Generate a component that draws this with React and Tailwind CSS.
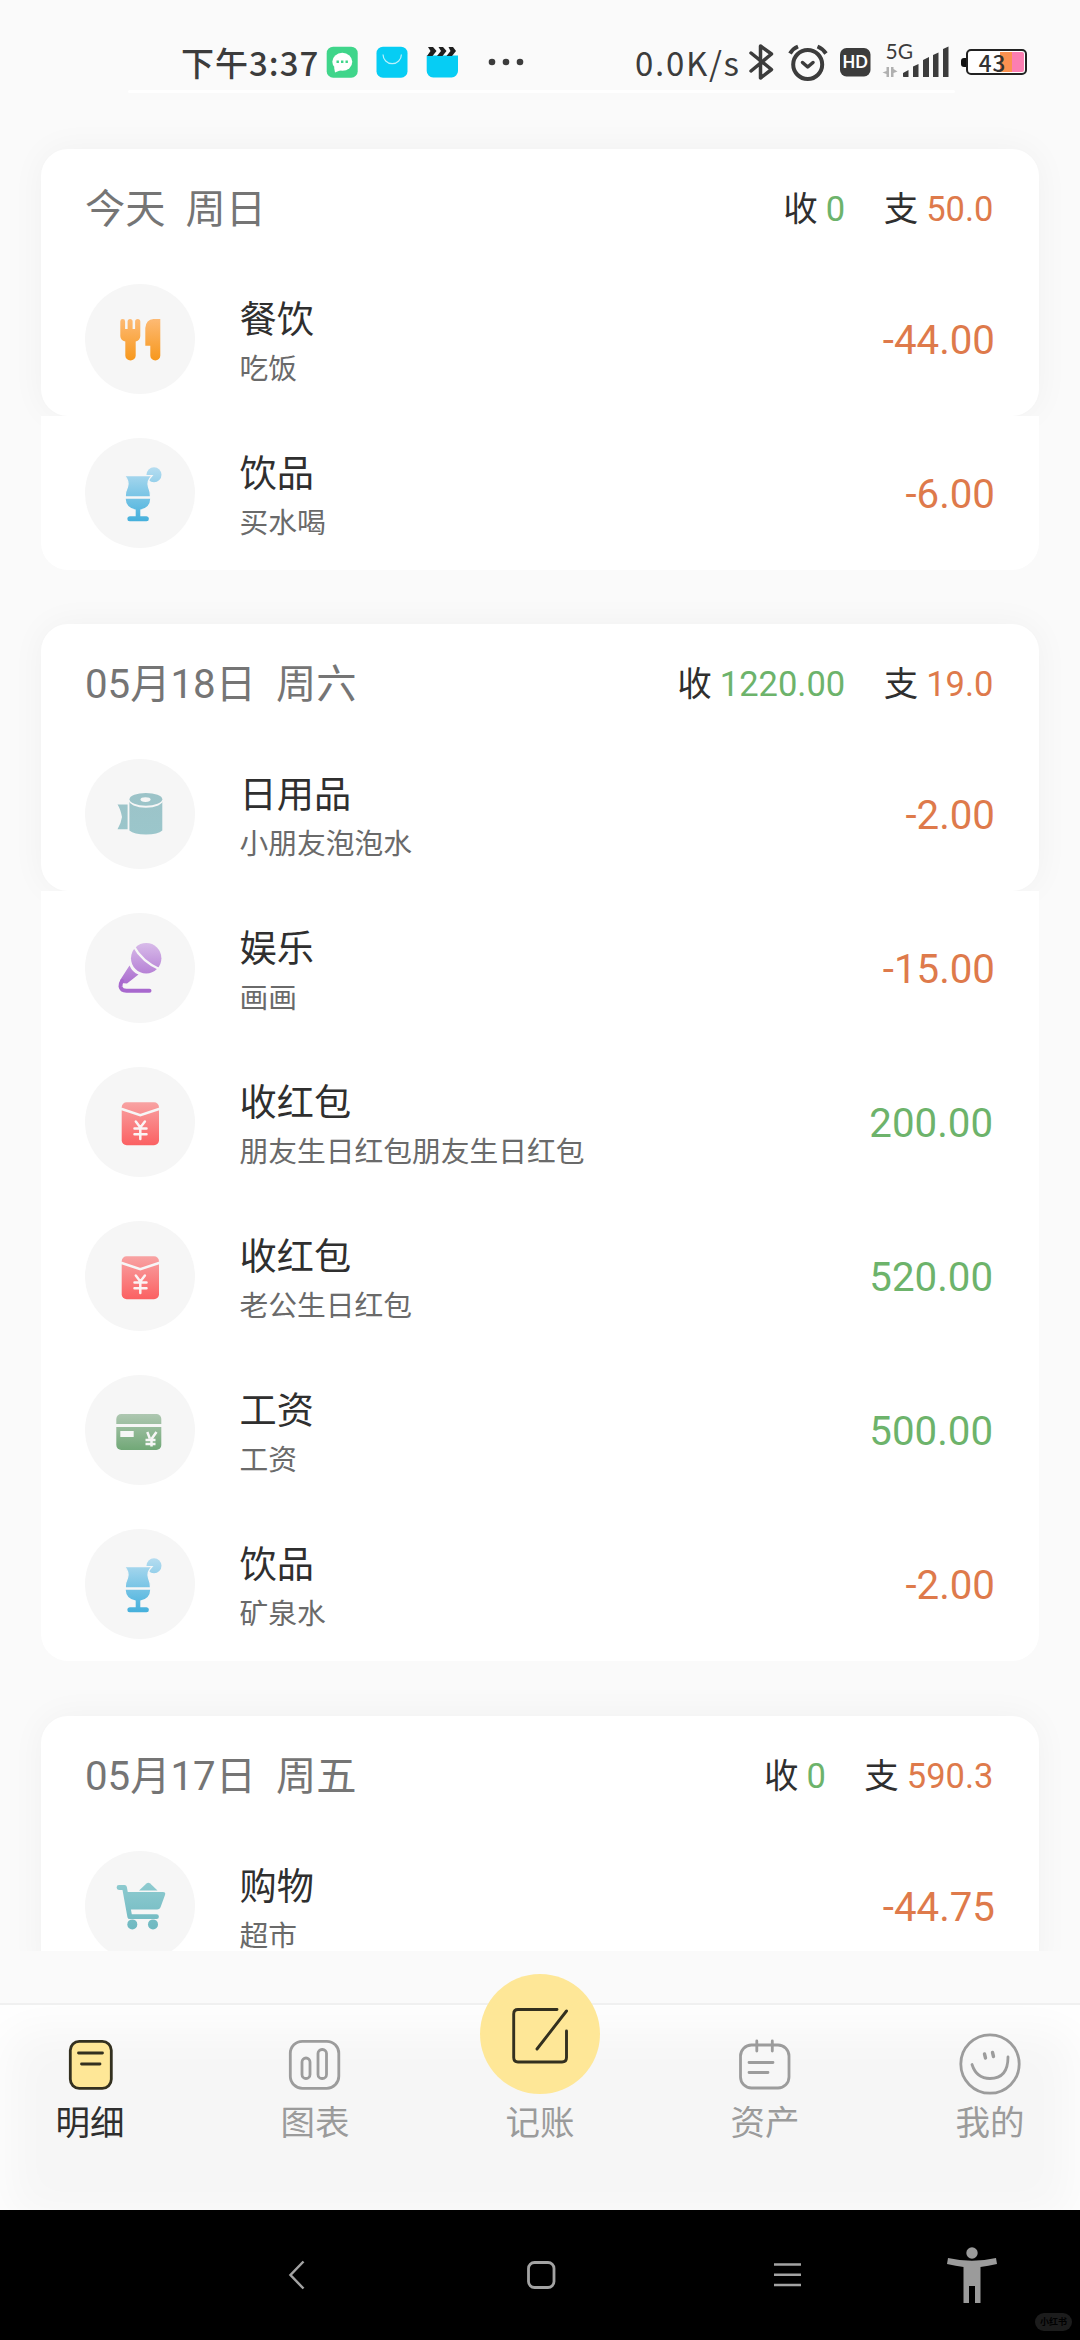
import React from "react";

/* ---------- category icons, drawn on a 110 x 110 disc ---------- */

function Gradient({ id, from, to, y1, y2 }) {
  return (
    <linearGradient id={id} gradientUnits="userSpaceOnUse" x1="0" x2="0" y1={y1} y2={y2}>
      <stop offset="0" stopColor={from} />
      <stop offset="1" stopColor={to} />
    </linearGradient>
  );
}

function Food() {
  return (
    <>
      <Gradient id="food" from="#fdba74" to="#f7981d" y1={35} y2={76} />
      <path
        fill="url(#food)"
        d="M35.3 37.5a2.4 2.4 0 0 1 4.8 0V45h2.5v-7.5a2.5 2.5 0 0 1 5 0V45h2.5v-7.5a2.6 2.6 0 0 1 5.2 0V52q0 4-4.6 5.6V71.500a5.200 5 0 0 1-10.400 0V57.600Q35.300 56 35.300 52Z"
      />
      <path fill="url(#food)" d="M75.300 35V71.500a5 5 0 0 1-10 0V61.700H60.300V44Q61 35.500 68.500 35Z" />
    </>
  );
}

function Drink() {
  return (
    <>
      <Gradient id="drink" from="#b4dcf0" to="#45b0dc" y1={30} y2={83} />
      <circle cx="69" cy="36.700" r="7.500" fill="url(#drink)" />
      <path
        fill="url(#drink)"
        stroke="#f6f6f6"
        strokeWidth="1.200"
        d="M39.500 37.700H67Q61.500 43 63.500 49Q65.500 53.500 65.500 58.900H40.200Q40.200 53.500 42.500 49Q44.500 43 39.500 37.700Z"
      />
      <path
        fill="url(#drink)"
        d="M40.700 60.700H65.200Q65 69.500 55.300 71.600V78.300H61.500a2.400 2.500 0 0 1 0 5H44.700a2.400 2.500 0 0 1 0-5H50.700V71.600Q41 69.500 40.700 60.700Z"
      />
    </>
  );
}

function Tissue() {
  return (
    <>
      <Gradient id="tissue" from="#9cc3c8" to="#9bc6cb" y1={33} y2={76} />
      <path fill="url(#tissue)" d="M44.400 42.500V71.500Q49 75.500 61 75.500T77.300 71.500V42.500Z" />
      <ellipse cx="60.900" cy="40.600" rx="17.400" ry="8.200" fill="#f6f6f6" />
      <ellipse cx="60.900" cy="40.300" rx="16.400" ry="6.400" fill="url(#tissue)" />
      <ellipse cx="60.500" cy="40.600" rx="5" ry="2.400" fill="#f6f6f6" />
      <path fill="url(#tissue)" d="M32.500 45.500H42.600V70.200H32.500Q36.200 64 37 58Q35.500 50 32.500 45.500Z" />
    </>
  );
}

function Mic() {
  return (
    <>
      <Gradient id="mic" from="#d9bdea" to="#a15dc9" y1={29} y2={80} />
      <circle cx="61.200" cy="45.200" r="15.200" fill="url(#mic)" />
      <path d="M48 32Q57 49 76 57" fill="none" stroke="#f6f6f6" strokeWidth="2.400" />
      <path fill="url(#mic)" d="M44.500 52.500Q47.500 59.500 53.500 61.500L42 70.500L35.500 70Q34.300 68.500 35.500 66.500Z" />
      <path
        d="M37 68Q35.300 70.500 35.500 73.500Q36.200 77.700 41.500 77.700H64.500"
        fill="none"
        stroke="#a868ce"
        strokeWidth="4"
        strokeLinecap="round"
      />
    </>
  );
}

function Envelope() {
  return (
    <>
      <Gradient id="envelope" from="#f8a3a3" to="#fb6163" y1={35} y2={78} />
      <rect x="36.700" y="35.300" width="37.300" height="43" rx="5" fill="url(#envelope)" />
      <path d="M36 41.800L55.300 48.300L74.700 41.800" fill="none" stroke="#f6f6f6" strokeWidth="2.500" />
      <path
        d="M50.800 54.500L55.300 60.500L59.900 54.500M55.300 60.500V72M49.500 61.500H61.500M49.500 67.200H61.500"
        fill="none"
        stroke="#fbf3f3"
        strokeWidth="2.500"
        strokeLinecap="round"
      />
    </>
  );
}

function Salary() {
  return (
    <>
      <Gradient id="salary" from="#aec7b1" to="#71a877" y1={39} y2={75} />
      <rect x="31.300" y="39" width="45" height="36" rx="5" fill="url(#salary)" />
      <path d="M31 50.400H77" stroke="#f6f6f6" strokeWidth="3" />
      <rect x="35.300" y="56" width="13.400" height="6" fill="#f6f6f6" />
      <path
        d="M62.300 57L64.800 63.500M71.500 57L66.500 64V71.500M60.500 65H70.500M60.500 69H70.500"
        fill="none"
        stroke="#f6f6f6"
        strokeWidth="2.500"
      />
    </>
  );
}

function Cart() {
  return (
    <>
      <Gradient id="cart" from="#8fcbd0" to="#6fb9c1" y1={31} y2={78} />
      <path
        d="M34 36.500H39.500L44.800 65.700H71.500"
        fill="none"
        stroke="url(#cart)"
        strokeWidth="4.800"
        strokeLinecap="round"
        strokeLinejoin="round"
      />
      <path fill="url(#cart)" d="M40 41H78Q81 41 80 44L75.800 55.500Q75 58.500 72 58.500H43Z" />
      <path fill="url(#cart)" d="M54 39.500L61.500 32.500Q63.300 31 65.200 32.500L72.500 39.500Z" />
      <circle cx="47.300" cy="73.400" r="5" fill="url(#cart)" />
      <circle cx="68" cy="73.400" r="5" fill="url(#cart)" />
    </>
  );
}

/* ---------- data ---------- */

const days = [
  {
    date: "今天  周日",
    income: "0",
    expense: "50.0",
    items: [
      { icon: Food, title: "餐饮", note: "吃饭", amount: "-44.00" },
      { icon: Drink, title: "饮品", note: "买水喝", amount: "-6.00" },
    ],
  },
  {
    date: "05月18日  周六",
    income: "1220.00",
    expense: "19.0",
    items: [
      { icon: Tissue, title: "日用品", note: "小朋友泡泡水", amount: "-2.00" },
      { icon: Mic, title: "娱乐", note: "画画", amount: "-15.00" },
      { icon: Envelope, title: "收红包", note: "朋友生日红包朋友生日红包", amount: "200.00" },
      { icon: Envelope, title: "收红包", note: "老公生日红包", amount: "520.00" },
      { icon: Salary, title: "工资", note: "工资", amount: "500.00" },
      { icon: Drink, title: "饮品", note: "矿泉水", amount: "-2.00" },
    ],
  },
  {
    date: "05月17日  周五",
    income: "0",
    expense: "590.3",
    items: [{ icon: Cart, title: "购物", note: "超市", amount: "-44.75" }],
  },
];

/* ---------- list ---------- */

function Entry({ item }) {
  const Icon = item.icon;
  const spent = item.amount.startsWith("-");
  return (
    <div className="flex h-[154px] items-center pr-[44px] pl-[44px]">
      <svg viewBox="0 0 110 110" className="size-[110px] shrink-0 rounded-full bg-[#f6f6f6]">
        <Icon />
      </svg>
      <div className="ml-[44.500px] flex-1 self-start pt-[34px]">
        <div className="text-[37.200px] leading-[49px] text-[#2f2f2f]">{item.title}</div>
        <div className="mt-[9px] text-[28.750px] leading-[30px] text-[#6a6a6a]">{item.note}</div>
      </div>
      <div
        className={
          spent ? "pt-[5px] text-[40.250px] text-[#de7a4b]" : "pt-[5px] pr-[2px] text-[40.250px] text-[#6db36b]"
        }
      >
        {item.amount}
      </div>
    </div>
  );
}

function Day({ day }) {
  const [first, ...rest] = day.items;
  return (
    <section className="last:mt-px">
      <div className="rounded-[27px] bg-white shadow-[0_0_34px_rgba(0,0,0,0.045)]">
        <div className="flex h-[113px] items-center justify-between pt-[9px] pr-[45.500px] pl-[44px]">
          <h2 className="text-[40.250px] whitespace-pre text-[#757575]">{day.date}</h2>
          <div className="flex gap-[38.500px] text-[34.500px] text-[#2f2f2f]">
            <div className="flex gap-[8px]">
              <span>收</span>
              <span className="text-[#6db36b]">{day.income}</span>
            </div>
            <div className="flex gap-[8px]">
              <span>支</span>
              <span className="text-[#de7a4b]">{day.expense}</span>
            </div>
          </div>
        </div>
        <Entry item={first} />
      </div>
      {rest.length > 0 && (
        <div className="relative rounded-b-[27px] bg-white">
          {rest.map((item, i) => (
            <Entry key={i} item={item} />
          ))}
        </div>
      )}
    </section>
  );
}

/* ---------- status bar ---------- */

function StatusBar() {
  return (
    <header className="h-[124px]">
      <div className="flex h-[90px] items-center pt-[34px] pl-[181px] font-['Noto_Sans_CJK_SC'] font-medium text-[#3c3c3c]">
        <span className="w-[145px] text-[33px] leading-[40px] tracking-[1px] whitespace-nowrap">下午3:37</span>
        <svg viewBox="0 0 200 40" className="h-[40px] w-[200px] shrink-0">
          <rect x="0.700" y="4.700" width="31" height="31" rx="6.500" fill="#3fd58a" />
          <ellipse cx="16.300" cy="19.800" rx="10" ry="9" fill="#fff" />
          <path d="M8 25L9 30.500L15 28Z" fill="#fff" />
          <path d="M10.500 18.600h2.400v2.400h-2.400zM15 18.600h2.400v2.400H15zM19.500 18.600h2.400v2.400h-2.400z" fill="#3fd58a" />
          <rect x="50.500" y="4.700" width="31" height="31" rx="6.500" fill="#06cdf4" />
          <path d="M57 12.500a9.200 9.200 0 0 0 18.400 0" fill="none" stroke="#b9f1fc" strokeWidth="1.200" />
          <path d="M100.700 13.500H132V29a6.500 6.500 0 0 1-6.500 6.500H107.200a6.500 6.500 0 0 1-6.500-6.500Z" fill="#06cdf4" />
          <path d="M102 5h5l3.500 4-4 5h-5.500l3.500-5zM112.500 5h4.500l3.500 4-4 5h-5.500l4-5zM122.500 5h4.500l3 4-4 5h-5.500l4-5z" fill="#1f1f1f" />
          <circle cx="166" cy="20" r="3.300" fill="#3c3c3c" />
          <circle cx="180" cy="20" r="3.300" fill="#3c3c3c" />
          <circle cx="194" cy="20" r="3.300" fill="#3c3c3c" />
        </svg>
        <span className="ml-[109px] w-[113px] text-[33px] leading-[40px] font-normal tracking-[1.700px] whitespace-nowrap">0.0K/s</span>
        <svg viewBox="0 0 130 40" className="h-[40px] w-[130px] shrink-0" fill="none" stroke="#3c3c3c">
          <path d="M3 11L23.500 27.500L12.500 36V4L23.500 12L3 29" strokeWidth="3.500" strokeLinejoin="round" strokeLinecap="round" />
          <circle cx="59.700" cy="22.500" r="14.500" strokeWidth="4" />
          <path d="M54.500 20.500L59.700 25L65 20.500" strokeWidth="3.500" strokeLinecap="round" strokeLinejoin="round" />
          <path d="M42 11.500Q45 6.500 50 4.500M69.500 4.500Q74.500 6.500 78 11.500" strokeWidth="4" />
          <rect x="92" y="6" width="30.500" height="28.500" rx="6.500" fill="#3c3c3c" stroke="none" />
          <text x="107.200" y="26" textAnchor="middle" fill="#fff" stroke="none" fontSize="16.500" fontWeight="700" fontFamily="Lato">HD</text>
        </svg>
        <svg viewBox="0 -10 80 60" className="ml-px h-[60px] w-[80px] shrink-0" fill="#3c3c3c">
          <text x="6.500" y="16.500" fontSize="21" fontFamily="Lato" fontWeight="400">5G</text>
          <path d="M10 25v10h-2.500v-3l-4-1.500 4-1.500v-4zM12 25h2.500v2l4 2.500-4 1.500v4h-2.500z" fill="#b0b0b0" />
          <path d="M24 34.500v-3.500l5.500-3v7h-5zM34 35v-10.500l5.500-2.500v13zM44 35v-17l6-3v20zM54 35v-22l5.500-2.500v24.500zM64 35v-28l5.500-2.500v30.500z" />
        </svg>
        <div className="ml-[2px] flex items-center">
          <div className="h-[9px] w-[5px] rounded-l-[3px] bg-[#111]" />
          <div className="relative flex h-[25.500px] w-[61px] items-center rounded-[5px] border-2 border-[#222] bg-white p-[1px]">
            <div className="ml-auto h-full w-[12px] bg-[#fb9150]" />
            <div className="h-full w-[12px] rounded-r-[2px] bg-[#fb7eb1]" />
            <span className="absolute inset-x-0 pr-[8px] text-center text-[22.500px] leading-[22px] font-medium tracking-[1px] text-[#333]">43</span>
          </div>
        </div>
      </div>
      <div className="ml-[128px] h-[3px] w-[827px] rounded-full bg-white" />
    </header>
  );
}

/* ---------- tab bar ---------- */

function Tab({ label, active, children }) {
  return (
    <div className="flex w-[120px] flex-col items-center">
      <div className="flex h-[88px] items-end justify-center">{children}</div>
      <span
        className={
          active
            ? "mt-[5px] text-[34.500px] leading-[50px] text-[#2f2f2f]"
            : "mt-[5px] text-[34.500px] leading-[50px] text-[#9b9b9b]"
        }
      >
        {label}
      </span>
    </div>
  );
}

function TabBar() {
  return (
    <nav className="relative flex h-[207px] justify-between border-t-2 border-[#f0f0f0] bg-[#f6f6f6] px-[30px] shadow-[inset_0_18px_50px_5px_#fff]">
      <Tab label="明细" active>
        <svg viewBox="0 0 60 60" className="h-[60px] w-[60px]" fill="none" stroke="#33301f" strokeWidth="2.800" strokeLinecap="round">
          <rect x="10.300" y="8.300" width="41" height="47" rx="9" fill="#fee797" />
          <path d="M18.500 20H42.500M21.500 31H40" />
        </svg>
      </Tab>
      <Tab label="图表">
        <svg viewBox="0 0 60 60" className="h-[60px] w-[60px]" fill="none" stroke="#9c9c9c" strokeWidth="2.800">
          <rect x="5.300" y="8.300" width="48.500" height="47" rx="12" />
          <rect x="17" y="25" width="8" height="20.500" rx="4" />
          <rect x="33" y="16.500" width="8.500" height="29" rx="4" />
        </svg>
      </Tab>
      <Tab label="记账">
        <svg viewBox="0 0 120 120" className="mb-[-1px] size-[120px] rounded-full bg-[#fee797]" fill="none" stroke="#33301f" strokeWidth="2.900" strokeLinecap="round" strokeLinejoin="round">
          <path d="M77 35.500H38Q33.700 35.500 33.700 40V83.500Q33.700 88 38 88H82Q86.500 88 86.500 83.500V57" />
          <path d="M86.500 37L57 75" />
        </svg>
      </Tab>
      <Tab label="资产">
        <svg viewBox="0 0 60 60" className="h-[60px] w-[60px]" fill="none" stroke="#9c9c9c" strokeWidth="2.800" strokeLinecap="round">
          <rect x="5.500" y="12" width="48.500" height="43" rx="11" />
          <path d="M21.800 8V18M37.300 8V18M14 29.500H38M14 39.500H33" />
        </svg>
      </Tab>
      <Tab label="我的">
        <svg viewBox="0 0 64 64" className="mb-[-3px] size-[64px]" fill="none" stroke="#9c9c9c" strokeWidth="2.800" strokeLinecap="round">
          <circle cx="32" cy="32" r="29.200" />
          <path d="M14 32.500Q18.500 46.500 32 46.500Q50 46.500 50 25" />
          <path d="M26.500 22L27.500 26M34.500 20.500L35.500 24.500" strokeWidth="3.400" />
        </svg>
      </Tab>
    </nav>
  );
}

/* ---------- system navigation ---------- */

function SystemNav() {
  return (
    <footer className="flex h-[130px] items-center bg-black pl-[280px]">
      <svg viewBox="0 0 32 32" className="size-[32px]" fill="none" stroke="#a3a3a3" strokeWidth="2.500">
        <path d="M23.500 2.500L10.500 16L23.500 29.500" />
      </svg>
      <svg viewBox="0 0 32 32" className="ml-[213px] size-[32px]" fill="none" stroke="#a3a3a3" strokeWidth="2.800">
        <rect x="3.500" y="3.500" width="25.500" height="25" rx="6" />
      </svg>
      <svg viewBox="0 0 32 32" className="ml-[215px] size-[32px]" stroke="#a3a3a3" strokeWidth="2.600">
        <path d="M2 5.500H29M2 15.800H29M2 26H29" />
      </svg>
      <svg viewBox="0 0 50 58" className="ml-[143px] h-[58px] w-[50px]" fill="#9b9b9b">
        <circle cx="25" cy="7" r="5.700" />
        <path d="M1 12Q25 17.500 49 12L50 18Q41 20 33.500 21V57H28V40H22V57H16.500V21Q9 20 0 18Z" />
      </svg>
      <div className="mt-[103px] ml-[38px] flex h-[18px] w-[37px] items-center justify-center self-start rounded-full bg-[#1c1c1c] text-[9px] leading-none font-bold text-black">
        <span>小红书</span>
      </div>
    </footer>
  );
}

export default function App() {
  return (
    <div className="flex h-[2340px] w-[1080px] flex-col overflow-hidden bg-[#fafafa] font-[Roboto,'Noto_Sans_CJK_SC',sans-serif]" lang="zh-CN">
      <StatusBar />
      <main className="flex h-[1827px] flex-col gap-[54px] overflow-hidden px-[41px] pt-[25px]">
        {days.map((day) => (
          <Day key={day.date} day={day} />
        ))}
      </main>
      <div className="mt-auto">
        <TabBar />
        <SystemNav />
      </div>
    </div>
  );
}
